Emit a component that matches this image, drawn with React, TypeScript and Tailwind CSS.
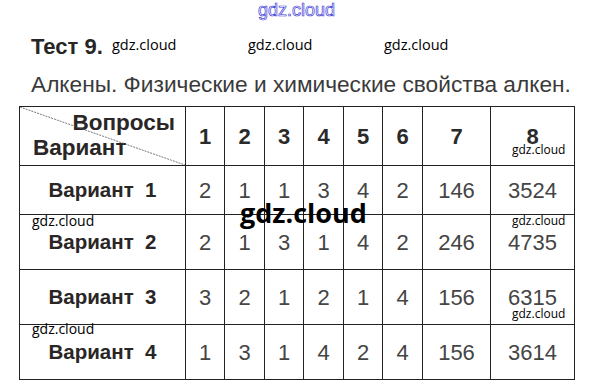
const answers = [
  { name: "Вариант  1", vals: ["2", "1", "1", "3", "4", "2", "146", "3524"] },
  { name: "Вариант  2", vals: ["2", "1", "3", "1", "4", "2", "246", "4735"] },
  { name: "Вариант  3", vals: ["3", "2", "1", "2", "1", "4", "156", "6315"] },
  { name: "Вариант  4", vals: ["1", "3", "1", "4", "2", "4", "156", "3614"] },
];

const rowHeights = ["h-[48px]", "h-[54px]", "h-[54px]", "h-[54px]"];

const Mark = ({ className }: { className: string }) => (
  <span className={`absolute font-['Open_Sans',sans-serif] text-black leading-none ${className}`}>
    gdz.cloud
  </span>
);

export default function App() {
  return (
    <div className="relative w-[592px] h-[391px] bg-white overflow-hidden font-['Liberation_Sans',Arial,sans-serif]">
      <div className="pt-[35px] pl-[31px]">
        <h1 className="text-[22px] leading-[24px] font-bold text-[#262626]">Тест 9.</h1>
        <p className="mt-[12px] text-[22.7px] leading-[26px] text-[#3a3a3a]">
          Алкены. Физические и химические свойства алкен.
        </p>
      </div>

      <div className="ml-[19px] mt-[9px] w-[556px] bg-[#222] p-px grid grid-cols-[165px_38px_39px_38px_39px_38px_39px_67px_83px] gap-px">
        <div className="relative h-[58px] bg-white flex flex-col pt-[3px] pl-[13px] pr-[10px] text-[22.5px] leading-[25px] font-bold text-[#2a2626]">
          <svg className="absolute inset-0 w-full h-full" preserveAspectRatio="none" viewBox="0 0 165 58">
            <line x1="0" y1="0" x2="165" y2="58" stroke="#555" strokeWidth="0.8" strokeDasharray="2 1" />
          </svg>
          <span className="self-end">Вопросы</span>
          <span className="self-start">Вариант</span>
        </div>
        {["1", "2", "3", "4", "5", "6", "7", "8"].map((n) => (
          <div key={n} className="h-[58px] bg-white flex items-center justify-center text-[22px] font-bold text-[#2a2a2a]">
            {n}
          </div>
        ))}
        {answers.map((row, i) => (
          <>
            <div
              key={row.name}
              className={`${rowHeights[i]} bg-white flex items-center justify-center whitespace-pre text-[20.5px] font-bold text-[#2a2626]`}
            >
              {row.name}
            </div>
            {row.vals.map((v, j) => (
              <div
                key={`${i}-${j}`}
                className={`${rowHeights[i]} bg-white flex items-center justify-center text-[22px] text-[#454545]`}
              >
                {v}
              </div>
            ))}
          </>
        ))}
      </div>

      <span className="absolute left-[258px] top-[1px] text-[18px] leading-none font-['Liberation_Sans',sans-serif] text-white [-webkit-text-stroke:0.7px_#3b3bd6]">
        gdz.cloud
      </span>
      <Mark className="left-[112px] top-[38px] text-[14.5px]" />
      <Mark className="left-[248px] top-[38px] text-[14.5px]" />
      <Mark className="left-[384px] top-[38px] text-[14.5px]" />
      <Mark className="left-[512px] top-[144px] text-[12px]" />
      <Mark className="left-[32px] top-[214px] text-[14px]" />
      <Mark className="left-[512px] top-[215px] text-[12px]" />
      <Mark className="left-[512px] top-[308px] text-[12px]" />
      <Mark className="left-[32px] top-[322px] text-[14px]" />
      <Mark className="left-[240px] top-[199px] text-[27px] font-bold" />
    </div>
  );
}
